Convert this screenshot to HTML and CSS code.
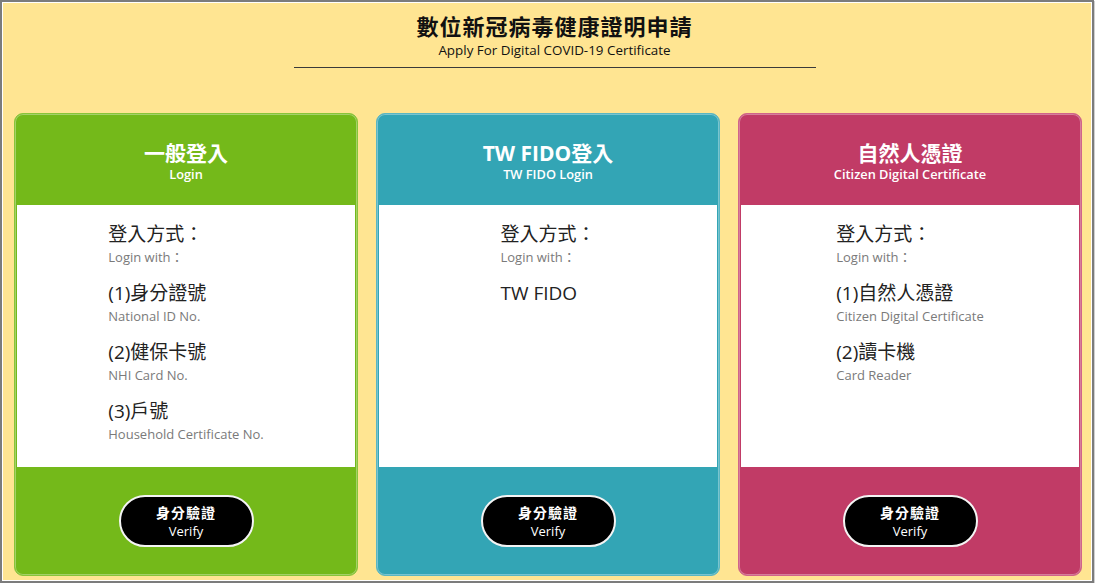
FILE: index.html
```html
<!DOCTYPE html>
<html lang="zh-Hant">
<head>
<meta charset="utf-8">
<title>數位新冠病毒健康證明申請</title>
<link rel="stylesheet" href="styles.css">
</head>
<body>
<div class="frame">
  <header class="page-head">
    <h1 class="title">數位新冠病毒健康證明申請</h1>
    <p class="subtitle">Apply For Digital COVID-19 Certificate</p>
    <hr class="rule">
  </header>
  <main class="cards">
    <section class="card card-green">
      <div class="card-head">
        <h2 class="card-title">一般登入</h2>
        <p class="card-sub">Login</p>
      </div>
      <div class="card-body">
        <div class="methods">
          <div class="item"><div class="zh">登入方式：</div><div class="en">Login with：</div></div>
          <div class="item"><div class="zh">(1)身分證號</div><div class="en">National ID No.</div></div>
          <div class="item"><div class="zh">(2)健保卡號</div><div class="en">NHI Card No.</div></div>
          <div class="item"><div class="zh">(3)戶號</div><div class="en">Household Certificate No.</div></div>
        </div>
      </div>
      <div class="card-foot">
        <button class="verify"><span class="v-zh">身分驗證</span><span class="v-en">Verify</span></button>
      </div>
    </section>
    <section class="card card-teal">
      <div class="card-head">
        <h2 class="card-title">TW FIDO登入</h2>
        <p class="card-sub">TW FIDO Login</p>
      </div>
      <div class="card-body">
        <div class="methods">
          <div class="item"><div class="zh">登入方式：</div><div class="en">Login with：</div></div>
          <div class="item"><div class="zh">TW FIDO</div></div>
        </div>
      </div>
      <div class="card-foot">
        <button class="verify"><span class="v-zh">身分驗證</span><span class="v-en">Verify</span></button>
      </div>
    </section>
    <section class="card card-pink">
      <div class="card-head">
        <h2 class="card-title">自然人憑證</h2>
        <p class="card-sub">Citizen Digital Certificate</p>
      </div>
      <div class="card-body">
        <div class="methods">
          <div class="item"><div class="zh">登入方式：</div><div class="en">Login with：</div></div>
          <div class="item"><div class="zh">(1)自然人憑證</div><div class="en">Citizen Digital Certificate</div></div>
          <div class="item"><div class="zh">(2)讀卡機</div><div class="en">Card Reader</div></div>
        </div>
      </div>
      <div class="card-foot">
        <button class="verify"><span class="v-zh">身分驗證</span><span class="v-en">Verify</span></button>
      </div>
    </section>
  </main>
</div>
</body>
</html>
```
FILE: styles.css
```css
html, body {
  margin: 0;
  padding: 0;
  background: #ffffff;
}
body {
  font-family: "Open Sans", "Noto Sans CJK TC", sans-serif;
  color: #222;
}
.frame {
  box-sizing: border-box;
  width: 1094px;
  height: 583px;
  border: 2px solid #7c7c7c;
  box-shadow: inset 0 0 0 1px #ffffff, 1px 1px 0 #cfcfcf;
  background: #ffe592;
  padding: 3px 9px 0 12px;
  display: flex;
  flex-direction: column;
}
.page-head {
  display: flex;
  flex-direction: column;
  align-items: center;
  padding-left: 12px;
}
.title {
  margin: 5px 0 0;
  font-size: 22px;
  font-weight: 700;
  line-height: 30px;
  color: #111;
  font-family: "Noto Sans CJK TC", sans-serif;
  letter-spacing: 1px;
}
.subtitle {
  margin: 1px 0 0;
  font-size: 13.4px;
  line-height: 18px;
  color: #111;
}
.rule {
  width: 522px;
  margin: 8px 0 0;
  border: 0;
  border-top: 1px solid #3a3a3a;
}
.cards {
  margin-top: 45px;
  display: grid;
  grid-template-columns: repeat(3, 344px);
  column-gap: 18px;
}
.card {
  box-sizing: border-box;
  height: 463px;
  border-radius: 9px;
  padding: 2px;
  display: flex;
  flex-direction: column;
  box-shadow: inset 0 0 0 1px rgba(255,255,255,0.35);
}
.card-green { background: #74b91a; border: 1px solid #88c43a; }
.card-teal { background: #33a5b5; border: 1px solid #5ab6c3; }
.card-pink { background: #c13b66; border: 1px solid #d0648a; }
.card-head {
  height: 89px;
  display: flex;
  flex-direction: column;
  align-items: center;
  justify-content: center;
  color: #ffffff;
  padding-top: 1px;
  box-sizing: border-box;
}
.card-title {
  margin: 0;
  font-size: 21px;
  line-height: 26px;
  font-weight: 700;
}
.card-sub {
  margin: 0;
  font-size: 12.8px;
  line-height: 16px;
  font-weight: 600;
}
.card-body {
  height: 262px;
  background: #ffffff;
  display: flex;
  justify-content: center;
  padding-top: 16px;
  box-sizing: border-box;
}
.methods {
  display: flex;
  flex-direction: column;
  gap: 13px;
}
.item .zh {
  font-size: 19px;
  line-height: 26px;
  color: #222;
  font-weight: 400;
}
.item .en {
  font-size: 13px;
  line-height: 20px;
  color: #7a7a7a;
}
.card-foot {
  flex: 1;
  display: flex;
  justify-content: center;
  align-items: flex-start;
  padding-top: 28px;
}
.verify {
  width: 135px;
  height: 52px;
  border-radius: 26px;
  background: #000000;
  border: 2px solid #f4f4f4;
  color: #ffffff;
  display: flex;
  flex-direction: column;
  align-items: center;
  justify-content: center;
  padding: 0;
  font-family: "Open Sans", "Noto Sans CJK TC", sans-serif;
  cursor: pointer;
}
.v-zh {
  font-size: 14px;
  line-height: 20px;
  font-weight: 700;
  font-family: "Noto Sans CJK TC", sans-serif;
  letter-spacing: 1px;
}
.v-en {
  font-size: 13px;
  line-height: 18px;
}
```
